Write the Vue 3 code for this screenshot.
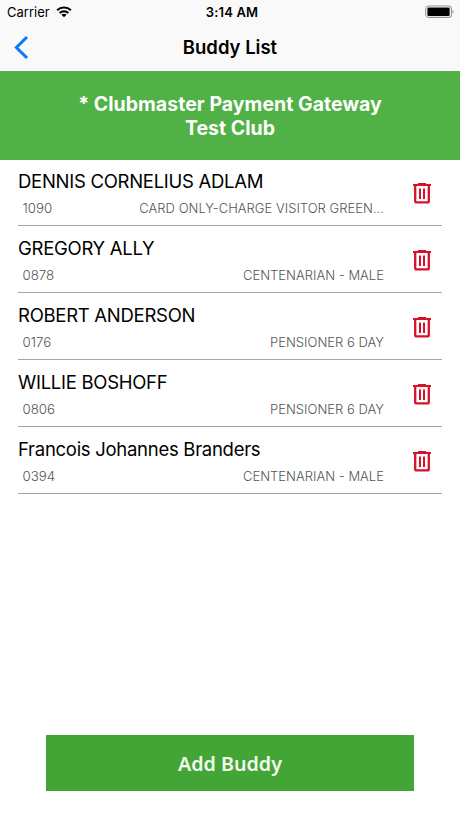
<script setup>
const buddies = [
  { name: 'DENNIS CORNELIUS ADLAM', number: '1090', type: 'CARD ONLY-CHARGE VISITOR GREEN...' },
  { name: 'GREGORY ALLY', number: '0878', type: 'CENTENARIAN - MALE' },
  { name: 'ROBERT ANDERSON', number: '0176', type: 'PENSIONER 6 DAY' },
  { name: 'WILLIE BOSHOFF', number: '0806', type: 'PENSIONER 6 DAY' },
  { name: 'Francois Johannes Branders', number: '0394', type: 'CENTENARIAN - MALE' },
]
</script>

<template>
  <div class="screen">
    <div class="status">
      <div class="carrier">
        <span>Carrier</span>
        <svg class="wifi" width="16" height="12" viewBox="0 0 16 12" fill="none" stroke="#000" stroke-width="2.1">
          <path d="M1.1 4.3C5 .6 11 .6 14.9 4.3" />
          <path d="M3.6 7.1C6.1 4.7 9.9 4.7 12.4 7.1" />
          <path d="M8 11.3 5.4 8.8C7 7.5 9 7.5 10.6 8.8Z" fill="#000" stroke="none" />
        </svg>
      </div>
      <span class="time">3:14 AM</span>
      <svg class="battery" width="30" height="14" viewBox="0 0 30 14">
        <rect x=".7" y="1" width="25.8" height="11.4" rx="3.2" fill="#fff" stroke="#929292" stroke-width="1.1" />
        <rect x="2.4" y="2.5" width="22.3" height="8.4" rx="1.2" fill="#000" />
        <path d="M27.6 5v3.6c1.6-.6 1.6-3 0-3.6Z" fill="#929292" />
      </svg>
    </div>
    <header class="nav">
      <svg class="back" width="15" height="25" viewBox="0 0 15 25" fill="none" stroke="#067af5" stroke-width="3">
        <path d="M13 2 2.4 12.5 13 23" />
      </svg>
      <h1>Buddy List</h1>
    </header>
    <div class="club"><span>* Clubmaster Payment Gateway</span><span>Test Club</span></div>
    <ul class="list">
      <li v-for="buddy in buddies" :key="buddy.number">
        <div class="info">
          <div class="name">{{ buddy.name }}</div>
          <div class="meta">
            <span>{{ buddy.number }}</span>
            <span class="type">{{ buddy.type }}</span>
          </div>
        </div>
        <svg class="trash" width="18" height="21" viewBox="0 0 18 21" fill="none" stroke="#d9102a">
          <path d="M0 2h18M5 1h8" stroke-width="2" />
          <path d="M2.2 2v16c0 1 .4 1.4 1.4 1.4h10.8c1 0 1.4-.4 1.4-1.4V2" stroke-width="2.3" />
          <path d="M7 5.6v10.4M11 5.6v10.4" stroke-width="2" />
        </svg>
      </li>
    </ul>
    <button class="add">Add Buddy</button>
  </div>
</template>

<style>
body {
  margin: 0;
  background: #fff;
}
</style>

<style scoped>
.screen {
  width: 460px;
  height: 818px;
  box-sizing: border-box;
  display: flex;
  flex-direction: column;
  background: #fff;
  color: #000;
  font-family: Inter, sans-serif;
}
.status {
  height: 24px;
  flex: none;
  display: grid;
  grid-template-columns: 1fr auto 1fr;
  align-items: center;
  padding: 0 5px 0 7px;
  background: #f9f9f9;
  font-size: 13px;
}
.carrier {
  display: flex;
  align-items: center;
  gap: 6px;
}
.time {
  padding-left: 2px;
  font-weight: 600;
  letter-spacing: 0.15px;
}
.battery {
  justify-self: end;
}
.nav {
  height: 47px;
  flex: none;
  display: grid;
  grid-template-columns: 60px 1fr 60px;
  align-items: center;
  box-sizing: border-box;
  padding-bottom: 1px;
  background: #f9f9f9;
}
.back {
  margin-left: 14px;
}
h1 {
  margin: 0;
  text-align: center;
  font-size: 18.5px;
  font-weight: 600;
}
.club {
  height: 89px;
  flex: none;
  display: flex;
  flex-direction: column;
  align-items: center;
  justify-content: center;
  background: #50b146;
  color: #fff;
  font-size: 19.5px;
  font-weight: 700;
  letter-spacing: 0.03px;
  line-height: 24px;
}
.list {
  margin: 0;
  padding: 0 18px;
  list-style: none;
}
li {
  height: 67px;
  box-sizing: border-box;
  display: flex;
  border-bottom: 1px solid #a5a5a5;
}
li:first-child {
  height: 66px;
}
li:first-child .info {
  padding-top: 9px;
}
li:first-child .trash {
  margin-top: 23px;
}
.info {
  width: 366px;
  padding-top: 10px;
}
.name {
  height: 26px;
  font-size: 18.5px;
  letter-spacing: -0.28px;
  line-height: 25px;
  white-space: nowrap;
}
.meta {
  display: flex;
  justify-content: space-between;
  padding-left: 4.5px;
  margin-top: 2px;
  font-size: 13.3px;
  font-weight: 300;
  line-height: 23px;
  color: #555;
  white-space: nowrap;
}
.type {
  font-size: 13px;
  letter-spacing: 0.02px;
}
.trash {
  margin: 24px 0 0 29px;
}
.add {
  width: 368px;
  height: 56px;
  margin: auto auto 27px;
  padding: 0;
  border: 0;
  background: #43a535;
  color: #f2fbef;
  font-family: "Noto Sans", sans-serif;
  font-size: 19.7px;
  font-weight: 600;
}
</style>
